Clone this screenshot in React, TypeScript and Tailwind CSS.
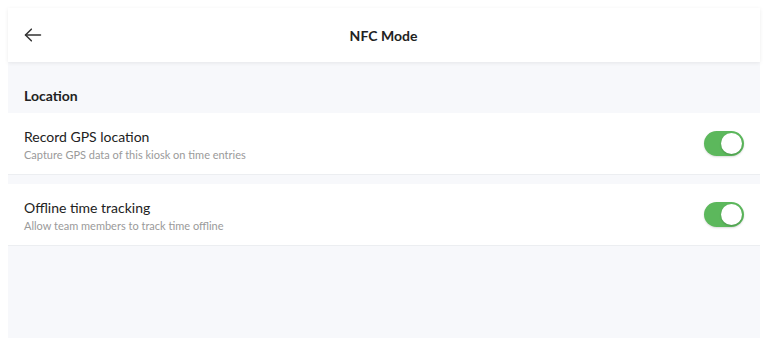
import React from "react";

function Toggle() {
  return (
    <div className="w-[40px] h-[25px] rounded-full bg-[#5cb85c] relative shadow-[0_1px_2px_rgba(0,0,0,0.15)]">
      <div className="absolute right-[2px] top-[2px] w-[21px] h-[21px] rounded-full bg-white shadow-[0_1px_2px_rgba(0,0,0,0.2)]" />
    </div>
  );
}

function Row({ title, sub }: { title: string; sub: string }) {
  return (
    <div className="h-[62px] bg-white border-b border-[#eceef1] flex items-center justify-between pl-4 pr-[16px]">
      <div className="flex flex-col pt-[3px]">
        <div className="text-[14px] leading-[18px] text-[#222]">{title}</div>
        <div className="text-[11px] leading-[16px] text-[#9a9a9a] mt-[1px]">{sub}</div>
      </div>
      <Toggle />
    </div>
  );
}

export default function App() {
  return (
    <div
      className="w-[768px] h-[338px] bg-white pt-2 px-2 overflow-hidden"
      style={{ fontFamily: "Lato, 'Noto Sans', sans-serif" }}
    >
      <div className="h-[330px] bg-[#f7f8fb] flex flex-col">
        <div className="h-[54px] bg-white shadow-[0_1px_4px_rgba(0,0,0,0.08)] flex items-center pl-[15px] pr-4 relative z-10">
          <svg width="20" height="20" viewBox="0 0 24 24" fill="none" stroke="#333" strokeWidth="1.8" strokeLinecap="round" strokeLinejoin="round">
            <path d="M21 12H3" />
            <path d="M10 5l-7 7 7 7" />
          </svg>
          <div className="flex-1 text-center text-[14px] font-bold text-[#222] pr-[20px]">NFC Mode</div>
        </div>
        <div className="h-[51px] flex items-center pl-4 pt-[16px]">
          <div className="text-[14px] font-bold text-[#222]">Location</div>
        </div>
        <Row title="Record GPS location" sub="Capture GPS data of this kiosk on time entries" />
        <div className="h-[9px]" />
        <Row title="Offline time tracking" sub="Allow team members to track time offline" />
      </div>
    </div>
  );
}
